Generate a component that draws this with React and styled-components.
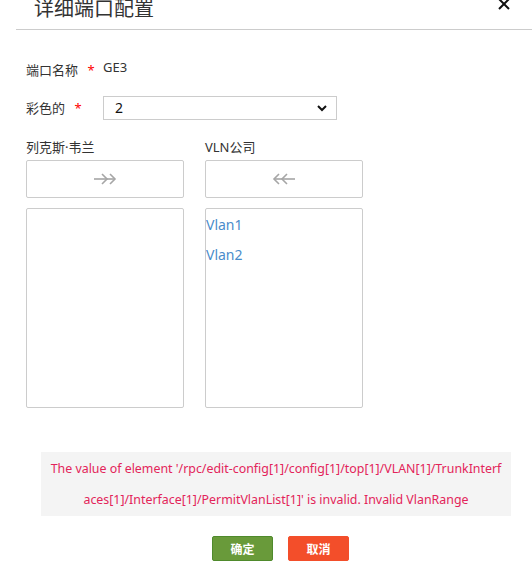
import React from 'react';
import styled, { createGlobalStyle } from 'styled-components';

const leftItems = [];
const rightItems = ['Vlan1', 'Vlan2'];

const errorLines = [
  "The value of element '/rpc/edit-config[1]/config[1]/top[1]/VLAN[1]/TrunkInterf",
  "aces[1]/Interface[1]/PermitVlanList[1]' is invalid. Invalid VlanRange",
];

const Arrows = ({ dir }) => (
  <svg width="24" height="12" viewBox="0 0 24 12" fill="none" stroke="#a6a6a6" strokeWidth="1.6">
    {dir === 'right' ? (
      <>
        <path d="M1 6h21" />
        <path d="M9 1l5 5-5 5" />
        <path d="M17 1l5 5-5 5" />
      </>
    ) : (
      <>
        <path d="M2 6h21" />
        <path d="M7 1L2 6l5 5" />
        <path d="M15 1l-5 5 5 5" />
      </>
    )}
  </svg>
);

const App = () => (
  <React.Fragment>
    <GlobalStyle />
    <Dialog>
      <Header>
        <Title>详细端口配置</Title>
        <Close>
          <svg width="12" height="12" viewBox="0 0 12 12" stroke="#111" strokeWidth="2">
            <path d="M1 -1l10 10M11 -1L1 9" />
          </svg>
        </Close>
      </Header>

      <Body>
        <Field>
          <Label width={66}>
            端口名称 <Star>*</Star>
          </Label>
          <Value>GE3</Value>
        </Field>

        <Field $top={16}>
          <Label width={77}>
            彩色的 <Star>*</Star>
          </Label>
          <SelectBox>
            <span>2</span>
            <svg width="10" height="7" viewBox="0 0 10 7" fill="none" stroke="#111" strokeWidth="2">
              <path d="M1 1l4 4 4-4" />
            </svg>
          </SelectBox>
        </Field>

        <Columns>
          <Column>
            <ColTitle>列克斯·韦兰</ColTitle>
            <MoveButton>
              <Arrows dir="right" />
            </MoveButton>
            <ListBox>
              {leftItems.map(i => (
                <Item key={i}>{i}</Item>
              ))}
            </ListBox>
          </Column>
          <Column>
            <ColTitle>VLN公司</ColTitle>
            <MoveButton>
              <Arrows dir="left" />
            </MoveButton>
            <ListBox>
              {rightItems.map(i => (
                <Item key={i}>{i}</Item>
              ))}
            </ListBox>
          </Column>
        </Columns>

        <ErrorBox>
          {errorLines.map(l => (
            <ErrorLine key={l}>{l}</ErrorLine>
          ))}
        </ErrorBox>

        <Footer>
          <Button $kind="ok">确定</Button>
          <Button $kind="cancel">取消</Button>
        </Footer>
      </Body>
    </Dialog>
  </React.Fragment>
);

const GlobalStyle = createGlobalStyle`
  html, body, #root {
    margin: 0;
    width: 100%;
  }

  body {
    font-family: "Noto Sans", "Noto Sans CJK SC", sans-serif;
    color: #333;
    background: #fff;
  }
`;

const Dialog = styled.div`
  width: 532px;
  height: 569px;
  overflow: hidden;
`;

const Header = styled.div`
  display: flex;
  justify-content: space-between;
  align-items: flex-end;
  height: 29px;
  margin-left: 16px;
  border-bottom: 1px solid #cccccc;
`;

const Title = styled.h2`
  margin: 0 0 6px 18px;
  font-size: 20px;
  font-weight: 400;
  line-height: 28px;
  color: #333;
`;

const Close = styled.div`
  align-self: flex-start;
  margin-right: 22px;
  line-height: 0;
`;

const Body = styled.div`
  padding: 0 0 0 26px;
`;

const Field = styled.div`
  display: flex;
  align-items: center;
  margin-top: ${p => p.$top ?? 30}px;
  font-size: 13px;
  line-height: 20px;
`;

const Label = styled.div`
  width: ${p => p.width}px;
  flex-shrink: 0;
  white-space: nowrap;
  color: #333;
  font-size: 13px;
`;

const Star = styled.span`
  color: #ff0000;
  margin-left: 6px;
`;

const Value = styled.span`
  margin-left: 11px;
  margin-top: -6px;
  font-size: 13px;
  color: #333;
`;

const SelectBox = styled.div`
  display: flex;
  align-items: center;
  justify-content: space-between;
  box-sizing: border-box;
  width: 234px;
  height: 24px;
  padding: 0 9px 0 11px;
  border: 1px solid #cccccc;
  font-size: 14px;
  line-height: 20px;
  color: #111;
`;

const Columns = styled.div`
  display: flex;
  gap: 21px;
  margin-top: 17px;
`;

const Column = styled.div`
  display: flex;
  flex-direction: column;
  width: 158px;
`;

const ColTitle = styled.div`
  font-size: 13px;
  line-height: 20px;
  color: #333;
  margin-bottom: 3px;
`;

const MoveButton = styled.div`
  display: flex;
  align-items: center;
  justify-content: center;
  box-sizing: border-box;
  height: 38px;
  border: 1px solid #cccccc;
  border-radius: 2px;
`;

const ListBox = styled.div`
  box-sizing: border-box;
  height: 200px;
  margin-top: 10px;
  padding-top: 1px;
  border: 1px solid #cccccc;
  border-radius: 2px;
`;

const Item = styled.div`
  font-size: 14px;
  line-height: 30px;
  color: #4a8ccb;
`;

const ErrorBox = styled.div`
  box-sizing: border-box;
  width: 470px;
  margin: 44px 0 0 15px;
  padding: 1px 0;
  background: #f4f4f4;
  color: #e3245a;
  font-size: 12.4px;
  line-height: 31px;
  text-align: center;
`;

const ErrorLine = styled.div`
  white-space: nowrap;
`;

const Footer = styled.div`
  display: flex;
  gap: 15px;
  margin: 20px 0 0 186px;
`;

const Button = styled.div`
  box-sizing: border-box;
  display: flex;
  align-items: center;
  justify-content: center;
  width: 61px;
  height: 25px;
  border-radius: 2px;
  font-size: 12px;
  font-weight: 700;
  color: #fff;
  background: ${p => (p.$kind === 'ok' ? '#699a3a' : '#f34e2a')};
  border: 1px solid ${p => (p.$kind === 'ok' ? '#4f8a2c' : '#f34e2a')};
`;

export default App;
